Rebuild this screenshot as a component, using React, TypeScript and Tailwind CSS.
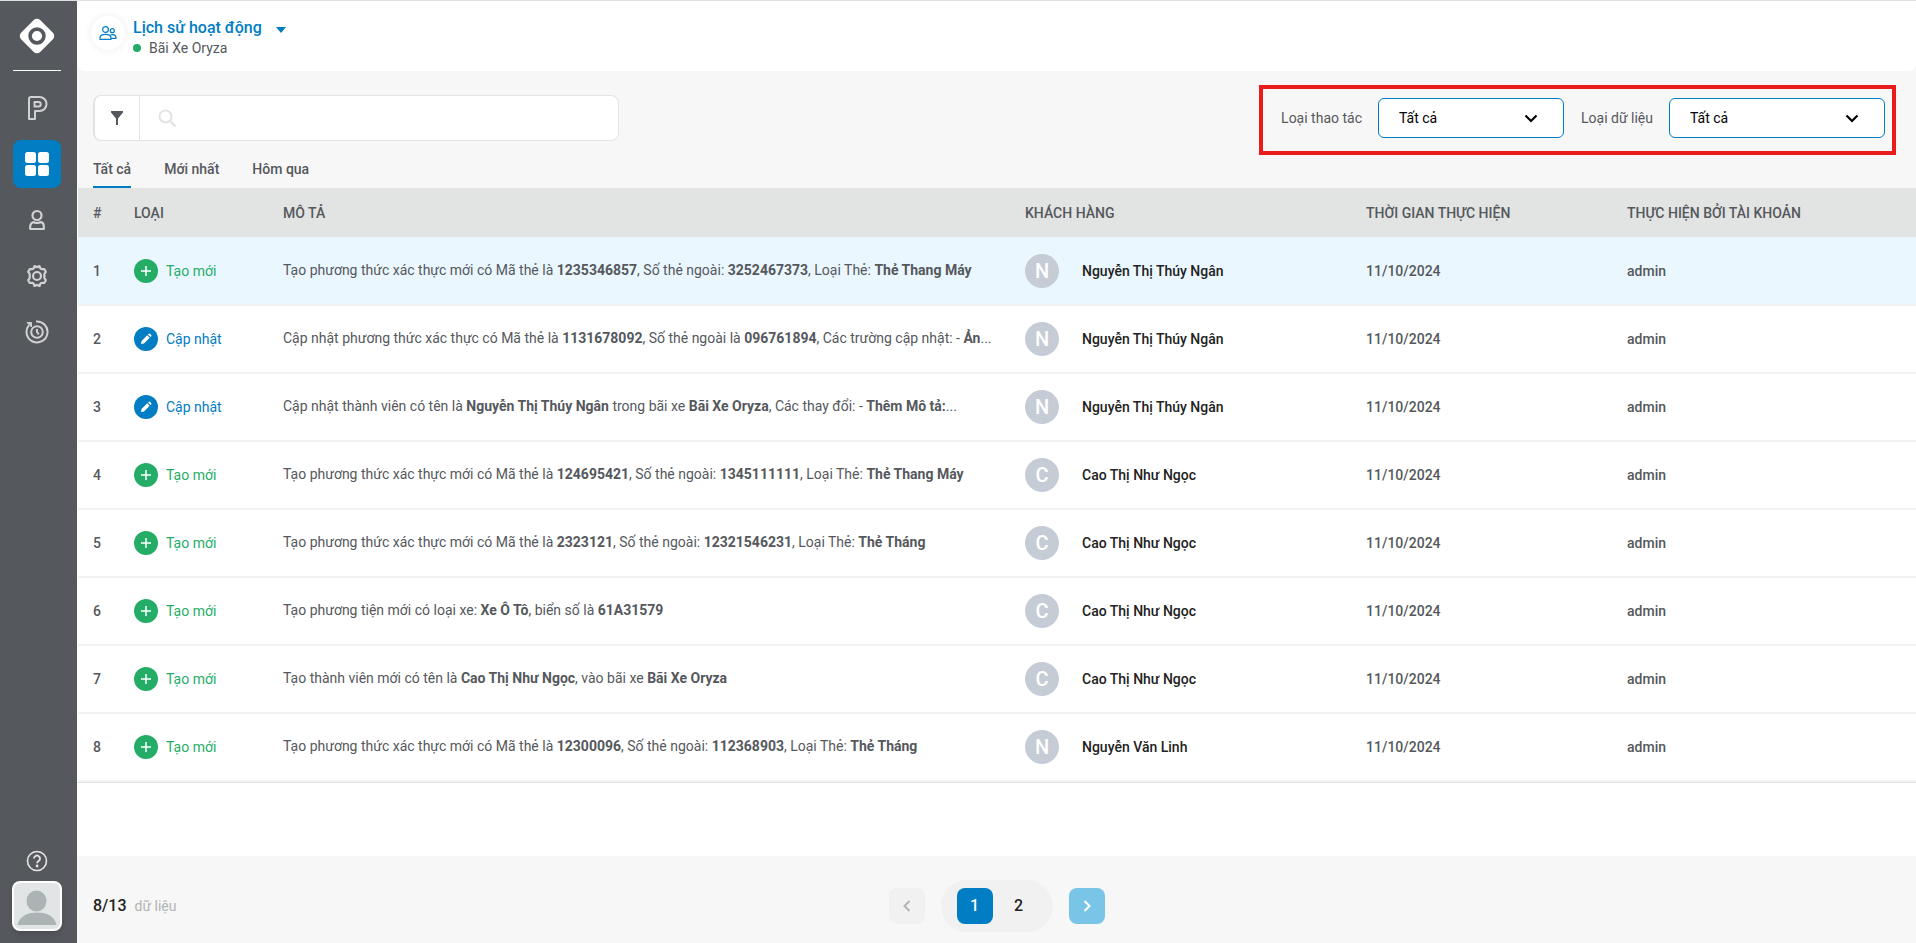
import React from "react";

type Kind = "create" | "update";

interface Row {
  kind: Kind;
  desc: string;
  customer: string;
}

/* Segments between asterisks are emphasised. */
const rows: Row[] = [
  { kind: "create", desc: "Tạo phương thức xác thực mới có Mã thẻ là *1235346857*, Số thẻ ngoài: *3252467373*, Loại Thẻ: *Thẻ Thang Máy*", customer: "Nguyễn Thị Thúy Ngân" },
  { kind: "update", desc: "Cập nhật phương thức xác thực có Mã thẻ là *1131678092*, Số thẻ ngoài là *096761894*, Các trường cập nhật: - *Ản*...", customer: "Nguyễn Thị Thúy Ngân" },
  { kind: "update", desc: "Cập nhật thành viên có tên là *Nguyễn Thị Thúy Ngân* trong bãi xe *Bãi Xe Oryza*, Các thay đổi: - *Thêm Mô tả:*...", customer: "Nguyễn Thị Thúy Ngân" },
  { kind: "create", desc: "Tạo phương thức xác thực mới có Mã thẻ là *124695421*, Số thẻ ngoài: *1345111111*, Loại Thẻ: *Thẻ Thang Máy*", customer: "Cao Thị Như Ngọc" },
  { kind: "create", desc: "Tạo phương thức xác thực mới có Mã thẻ là *2323121*, Số thẻ ngoài: *12321546231*, Loại Thẻ: *Thẻ Tháng*", customer: "Cao Thị Như Ngọc" },
  { kind: "create", desc: "Tạo phương tiện mới có loại xe: *Xe Ô Tô*, biển số là *61A31579*", customer: "Cao Thị Như Ngọc" },
  { kind: "create", desc: "Tạo thành viên mới có tên là *Cao Thị Như Ngọc*, vào bãi xe *Bãi Xe Oryza*", customer: "Cao Thị Như Ngọc" },
  { kind: "create", desc: "Tạo phương thức xác thực mới có Mã thẻ là *12300096*, Số thẻ ngoài: *112368903*, Loại Thẻ: *Thẻ Tháng*", customer: "Nguyễn Văn Linh" },
];

function Rich({ text }: { text: string }) {
  return (
    <>
      {text.split("*").map((part, i) =>
        i % 2 ? (
          <strong key={i} className="font-bold">
            {part}
          </strong>
        ) : (
          <React.Fragment key={i}>{part}</React.Fragment>
        ),
      )}
    </>
  );
}

function NavButton({ label, active, children }: { label: string; active?: boolean; children: React.ReactNode }) {
  return (
    <button
      type="button"
      aria-label={label}
      className={
        active
          ? "flex size-12 items-center justify-center rounded-lg bg-[#007dc3] text-white"
          : "flex size-12 items-center justify-center rounded-lg text-[#d0d1d2]"
      }
    >
      {children}
    </button>
  );
}

function Sidebar() {
  return (
    <nav className="flex w-[77px] shrink-0 flex-col items-center bg-[#55585c] pr-[3px]">
      <a href="#" aria-label="Home" className="mt-4 block">
        <svg width="38" height="38" viewBox="0 0 38 38">
          <rect x="5.5" y="5.5" width="27" height="27" rx="4.5" fill="#fff" transform="rotate(45 19 19)" />
          <circle cx="19" cy="19" r="6.9" fill="#fff" stroke="#55585c" strokeWidth="3.6" />
        </svg>
      </a>
      <hr className="mt-[15px] w-12 border-t border-white" />
      <div className="mt-[13px] flex flex-col gap-2">
        <NavButton label="Parking">
          <svg width="24" height="26" viewBox="0 0 24 26" fill="none" stroke="currentColor" strokeWidth="2" strokeLinejoin="round">
            <path d="M4 24V4a2 2 0 0 1 2-2h8.500a6.800 6.800 0 0 1 0 14H10v8z" />
            <path d="M9.500 7h4a2.200 2.200 0 0 1 0 4.400h-4z" />
          </svg>
        </NavButton>
        <NavButton label="Dashboard" active>
          <svg width="24" height="24" viewBox="0 0 24 24" fill="currentColor">
            <rect width="11" height="11" rx="2.5" />
            <rect x="13" width="11" height="11" rx="2.5" />
            <rect y="13" width="11" height="11" rx="2.5" />
            <rect x="13" y="13" width="11" height="11" rx="2.5" />
          </svg>
        </NavButton>
        <NavButton label="Members">
          <svg width="24" height="24" viewBox="0 0 24 24" fill="none" stroke="currentColor" strokeWidth="2.2" strokeLinejoin="round">
            <circle cx="12" cy="7.500" r="4.500" />
            <path d="M5.200 21v-2.500c0-2.500 1.500-4.300 3.800-4.300 1.500.8 4.500.8 6 0 2.300 0 3.800 1.800 3.800 4.300V21z" />
          </svg>
        </NavButton>
        <NavButton label="Settings">
          <svg width="24" height="24" viewBox="0 0 24 24" fill="none" stroke="currentColor" strokeWidth="2.2" strokeLinejoin="round">
            <path d="M9 3.800Q9 2 10 2q1 1.200 2 1.200T14 2q1 0 1 1.800.6 1.400 2 1.400l2.200-.2 1.600 2.800-1.300 1.800q-.7 1.400.1 2.400.3 0 0 0-.8 1-.1 2.400l1.300 1.800-1.600 2.800-2.200-.2q-1.400 0-2 1.400Q15 22 14 22q-1-1.200-2-1.200T10 22q-1 0-1-1.800-.6-1.400-2-1.400l-2.200.2-1.600-2.800 1.300-1.800q.7-1.400 0-2.400.7-1 0-2.400L3.200 7.800 4.800 5 7 5.200q1.400 0 2-1.400z" />
            <circle cx="12" cy="12" r="4" />
          </svg>
        </NavButton>
        <NavButton label="History">
          <svg width="24" height="24" viewBox="0 0 24 24" fill="none" stroke="currentColor" strokeWidth="2">
            <path d="M11 1.500A10.500 10.500 0 1 1 4 5.200" />
            <path d="M2 2.500h4.500V7z" fill="currentColor" strokeWidth="1" />
            <circle cx="12" cy="12" r="5.800" />
            <path d="M12 9v3l1.800 2.300" />
          </svg>
        </NavButton>
      </div>
      <button type="button" aria-label="Help" className="mt-auto text-[#e6e6e7]">
        <svg width="22" height="22" viewBox="0 0 22 22" fill="none" stroke="currentColor" strokeWidth="1.6">
          <circle cx="11" cy="11" r="9.500" />
          <path d="M8 8.600a3 3 0 1 1 4.600 2.500c-1 .6-1.500 1-1.500 2.100" strokeWidth="1.8" />
          <circle cx="11.100" cy="16" r=".6" fill="currentColor" />
        </svg>
      </button>
      <button type="button" aria-label="Account" className="mt-[9px] mb-3 size-[50px] overflow-hidden rounded-lg border-2 border-white bg-[#e2e5e6] shadow-md">
        <svg width="46" height="46" viewBox="0 0 46 46" fill="#abb3b5">
          <ellipse cx="22.500" cy="18" rx="10" ry="10.500" />
          <path d="M3.500 42c1.500-8 9-12.500 19.500-12.500S41 34 42.500 42z" />
        </svg>
      </button>
    </nav>
  );
}

function Header() {
  return (
    <header className="flex h-[70px] items-start rounded-b-lg bg-white pt-[15px] pl-[14px]">
      <span className="flex size-[34px] items-center justify-center rounded-full text-[#007dc3] shadow-[0_0_8px_rgba(0,0,0,0.08)]">
        <svg width="18" height="16" viewBox="0 0 18 16" fill="none" stroke="currentColor" strokeWidth="1.2" strokeLinejoin="round">
          <circle cx="6.500" cy="4.500" r="2.900" />
          <path d="M1 14.400v-1.500c0-2.200 2.400-3.600 5.500-3.600s5.500 1.400 5.500 3.600v1.500z" />
          <circle cx="13.300" cy="5.700" r="2" />
          <path d="M11.500 10c2.500-1.200 5.500.1 5.500 2.600v.8h-4.800" />
        </svg>
      </span>
      <div className="ml-2">
        <button type="button" className="flex items-center text-base leading-6 font-medium text-[#007dc3]">
          Lịch sử hoạt động
          <svg className="mt-1 ml-[14px]" width="10" height="6" viewBox="0 0 10 6" fill="currentColor">
            <path d="M0 0h10L5 6z" />
          </svg>
        </button>
        <p className="flex items-center gap-2 text-sm leading-4 text-[#55585c]">
          <span className="size-2 rounded-full bg-[#25ad67]" />
          Bãi Xe Oryza
        </p>
      </div>
    </header>
  );
}

function FilterSelect({ id, label, wide }: { id: string; label: string; wide?: boolean }) {
  return (
    <div className="flex items-center gap-4">
      <label htmlFor={id} className="text-sm text-[#55585c]">
        {label}
      </label>
      <div className={wide ? "relative w-[216px]" : "relative w-[186px]"}>
        <select id={id} className="h-10 w-full appearance-none rounded-md border border-[#007dc3] bg-white px-5 text-sm text-black">
          <option>Tất cả</option>
        </select>
        <svg className="pointer-events-none absolute top-4 right-[26px]" width="14" height="9" viewBox="0 0 14 9" fill="none" stroke="#000" strokeWidth="2.2">
          <path d="M1.500 1.500 7 7l5.500-5.500" />
        </svg>
      </div>
    </div>
  );
}

function Toolbar() {
  return (
    <div className="flex h-[117px] items-start justify-between pr-5 pl-4">
      <div className="flex h-full flex-col justify-between pt-6">
        <div className="flex h-[46px] w-[526px] overflow-hidden rounded-lg border border-l-2 border-[#e2e4e3] bg-white">
          <button type="button" aria-label="Bộ lọc" className="flex w-[45px] items-center justify-center border-r border-[#e2e4e3]">
            <svg width="12" height="14" viewBox="0 0 12 14" fill="#55585c">
              <path d="M0 0h12v1.500L7 7.500V14H5V7.500L0 1.500z" />
            </svg>
          </button>
          <label htmlFor="search" className="flex items-center pl-[18px]">
            <svg width="19" height="19" viewBox="0 0 19 19" fill="none" stroke="#e2e4e3" strokeWidth="2">
              <circle cx="7.500" cy="7.500" r="6" />
              <path d="m12 12 5.500 5.500" strokeWidth="2.4" />
            </svg>
          </label>
          <input id="search" type="text" aria-label="Tìm kiếm" className="min-w-0 flex-1 px-3 text-sm outline-none" />
        </div>
        <div role="tablist" className="flex gap-[33px] text-sm font-medium text-[#55585c]">
          <button type="button" role="tab" aria-selected="true" className="border-b-2 border-[#007dc3] pb-[7px] leading-5">
            Tất cả
          </button>
          <button type="button" role="tab" className="border-b-2 border-transparent pb-[7px] leading-5">
            Mới nhất
          </button>
          <button type="button" role="tab" className="border-b-2 border-transparent pb-[7px] leading-5">
            Hôm qua
          </button>
        </div>
      </div>
      <div className="mt-[14px] flex h-[70px] items-start gap-[17px] border-4 border-[#e81c1c] pt-[9px] pr-[7px] pl-[18px]">
        <FilterSelect id="action" label="Loại thao tác" />
        <FilterSelect id="data" label="Loại dữ liệu" wide />
      </div>
    </div>
  );
}

function KindBadge({ kind }: { kind: Kind }) {
  if (kind === "create") {
    return (
      <span className="flex items-center gap-2 text-[#25ad67]">
        <svg width="24" height="24" viewBox="0 0 24 24">
          <circle cx="12" cy="12" r="12" fill="currentColor" />
          <path d="M12 7v10M7 12h10" stroke="#fff" strokeWidth="1.5" />
        </svg>
        Tạo mới
      </span>
    );
  }
  return (
    <span className="flex items-center gap-2 text-[#007dc3]">
      <svg width="24" height="24" viewBox="0 0 24 24">
        <circle cx="12" cy="12" r="12" fill="currentColor" />
        <path d="m7 17 .5-3 5.700-5.700 2.500 2.500L10 16.500zM14 7.500l.8-.8q.6-.4 1.100 0l1.400 1.400q.4.5 0 1.100l-.8.8z" fill="#fff" />
      </svg>
      Cập nhật
    </span>
  );
}

function ActivityTable() {
  return (
    <table className="w-full table-fixed border-separate border-spacing-0 text-left text-sm text-[#55585c]">
      <colgroup>
        <col className="w-14" />
        <col className="w-[149px]" />
        <col className="w-[742px]" />
        <col className="w-[341px]" />
        <col className="w-[261px]" />
        <col />
      </colgroup>
      <thead>
        <tr className="h-[49px] bg-[#e2e4e3]">
          <th className="pl-[15px] font-medium">#</th>
          <th className="font-medium">LOẠI</th>
          <th className="font-medium">MÔ TẢ</th>
          <th className="font-medium">KHÁCH HÀNG</th>
          <th className="font-medium">THỜI GIAN THỰC HIỆN</th>
          <th className="font-medium">THỰC HIỆN BỞI TÀI KHOẢN</th>
        </tr>
      </thead>
      <tbody className="[&_td]:border-b-2 [&_td]:border-[#f1f2f2]">
        {rows.map((row, i) => (
          <tr key={i} className="h-[68px] bg-white first:h-[69px] first:bg-[#eaf7ff]">
            <td className="pl-[15px] font-medium">{i + 1}</td>
            <td>
              <KindBadge kind={row.kind} />
            </td>
            <td className="truncate pr-8 pb-0.5">
              <Rich text={row.desc} />
            </td>
            <td>
              <span className="flex items-center gap-[23px] font-medium text-[#222]">
                <span className="flex size-[34px] items-center justify-center rounded-full bg-[#c5ccd5] text-xl text-white">{row.customer[0]}</span>
                {row.customer}
              </span>
            </td>
            <td className="font-medium">11/10/2024</td>
            <td className="font-medium">admin</td>
          </tr>
        ))}
      </tbody>
    </table>
  );
}

function Chevron({ d }: { d: string }) {
  return (
    <svg width="8" height="12" viewBox="0 0 8 12" fill="none" stroke="currentColor" strokeWidth="2">
      <path d={d} />
    </svg>
  );
}

function Footer() {
  return (
    <footer className="grid h-[87px] grid-cols-[1fr_auto_1fr] items-center bg-[#f7f7f7] px-4 pt-3">
      <p className="flex items-center gap-2 text-sm text-[#b3b3b3]">
        <span className="text-base font-medium text-[#222]">8/13</span>
        dữ liệu
      </p>
      <div className="flex items-center gap-4 font-medium">
        <button type="button" aria-label="Trang trước" className="flex size-9 items-center justify-center rounded-lg bg-[#f1f1f1] text-[#b3b3b3]">
          <Chevron d="M6.500 1 1.500 6l5 5" />
        </button>
        <div className="flex h-[52px] items-center gap-2 rounded-full bg-[#f1f1f1] px-4">
          <button type="button" aria-current="page" className="size-9 rounded-lg bg-[#007dc3] text-white">
            1
          </button>
          <button type="button" className="size-9 rounded-lg text-[#222]">
            2
          </button>
        </div>
        <button type="button" aria-label="Trang sau" className="flex size-9 items-center justify-center rounded-lg bg-[#78c5e7] text-white">
          <Chevron d="m1.500 1 5 5-5 5" />
        </button>
      </div>
    </footer>
  );
}

export default function App() {
  return (
    <div className="flex min-h-screen border-t border-[#dfe1e1] bg-[#f7f7f7] font-[Roboto,sans-serif]">
      <Sidebar />
      <div className="flex min-w-0 flex-1 flex-col">
        <Header />
        <Toolbar />
        <main className="flex-1 bg-white">
          <div className="border-b border-[#dfe1e1] pl-px">
            <ActivityTable />
          </div>
        </main>
        <Footer />
      </div>
    </div>
  );
}
